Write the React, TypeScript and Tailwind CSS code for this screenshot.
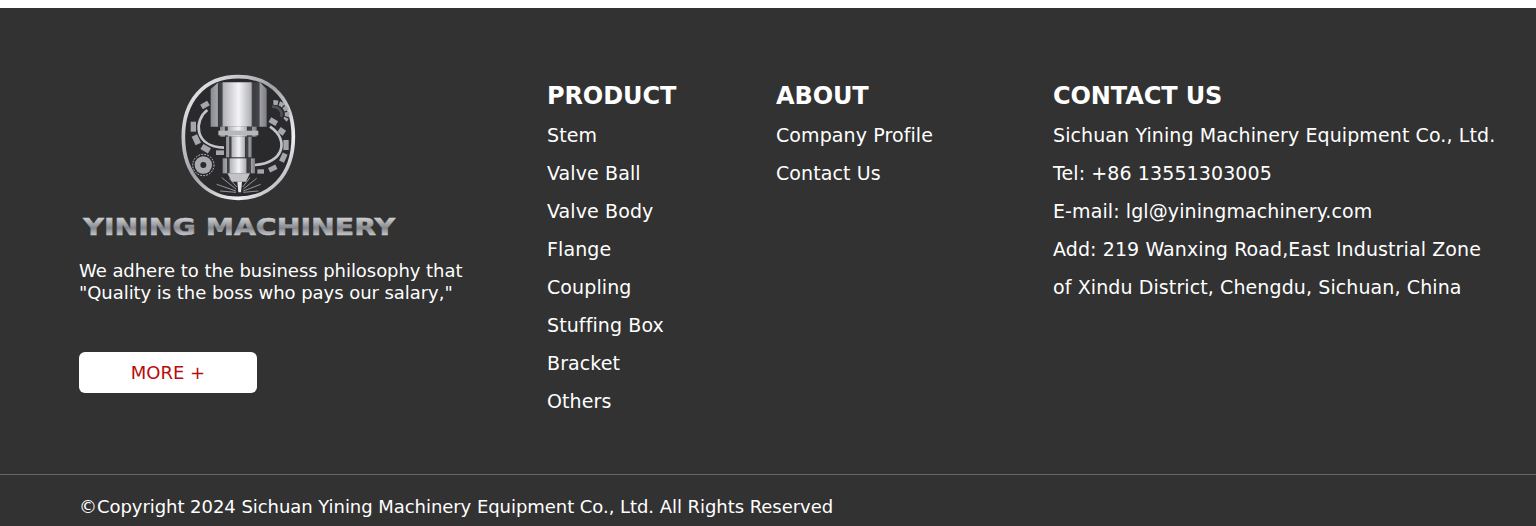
const productLinks = ['Stem', 'Valve Ball', 'Valve Body', 'Flange', 'Coupling', 'Stuffing Box', 'Bracket', 'Others']
const aboutLinks = ['Company Profile', 'Contact Us']
const contactLines = [
  'Sichuan Yining Machinery Equipment Co., Ltd.',
  'Tel: +86 13551303005',
  'E-mail: lgl@yiningmachinery.com',
  'Add: 219 Wanxing Road,East Industrial Zone',
  'of Xindu District, Chengdu, Sichuan, China',
]

function Logo() {
  return (
    <svg viewBox="27 0 993 540" className="block h-[180px] w-[331px]">
      <defs>
        <linearGradient id="ring" x1="0" y1="0" x2="1" y2="1">
          <stop offset="0" stopColor="#f6f6f8" />
          <stop offset="0.45" stopColor="#a0a2a7" />
          <stop offset="0.75" stopColor="#f0f0f3" />
          <stop offset="1" stopColor="#8f9095" />
        </linearGradient>
        <linearGradient id="steel" x1="0" y1="0" x2="1" y2="0">
          <stop offset="0" stopColor="#8a8b90" />
          <stop offset="0.12" stopColor="#a3a4a9" />
          <stop offset="0.14" stopColor="#3a3a3e" />
          <stop offset="0.2" stopColor="#45454a" />
          <stop offset="0.23" stopColor="#b4b5ba" />
          <stop offset="0.5" stopColor="#f4f4f6" />
          <stop offset="0.72" stopColor="#b0b1b6" />
          <stop offset="0.75" stopColor="#3a3a3e" />
          <stop offset="0.86" stopColor="#44444a" />
          <stop offset="0.89" stopColor="#9c9da2" />
          <stop offset="1" stopColor="#7d7e83" />
        </linearGradient>
        <linearGradient id="word" x1="0" y1="0" x2="0" y2="1">
          <stop offset="0" stopColor="#f4f4f6" />
          <stop offset="0.55" stopColor="#85878d" />
          <stop offset="1" stopColor="#f6f6f8" />
        </linearGradient>
      </defs>

      {/* badge ring */}
      <path
        d="M505 35 C610 35 670 110 670 215 C670 330 600 400 505 400 C410 400 340 330 340 215 C340 110 400 35 505 35Z"
        fill="#2a2a2c"
        stroke="url(#ring)"
        strokeWidth="11"
      />

      {/* curved pipes */}
      <path d="M412 135 C372 165 370 245 462 248" fill="none" stroke="#c4c5c9" strokeWidth="8" />
      <path d="M600 185 C660 225 640 295 555 300" fill="none" stroke="#c4c5c9" strokeWidth="8" />

      {/* ring segments */}
      <g fill="#a5a6ab">
        <rect x="393" y="112" width="24" height="16" transform="rotate(-30 405 120)" />
        <rect x="362" y="170" width="16" height="30" />
        <rect x="370" y="210" width="18" height="28" transform="rotate(-25 379 224)" />
        <rect x="394" y="242" width="26" height="18" transform="rotate(30 407 251)" />
        <rect x="438" y="256" width="24" height="14" />
        <rect x="598" y="162" width="24" height="16" transform="rotate(30 610 170)" />
        <rect x="625" y="190" width="20" height="18" transform="rotate(35 635 199)" />
        <rect x="640" y="225" width="16" height="30" />
        <rect x="632" y="265" width="16" height="26" transform="rotate(25 640 278)" />
        <rect x="596" y="303" width="24" height="15" transform="rotate(-25 608 310)" />
        <rect x="562" y="313" width="20" height="13" />
      </g>

      {/* top right gear */}
      <path d="M610 112 C650 112 660 150 645 165" fill="none" stroke="#a5a6ab" strokeWidth="14" strokeDasharray="14 4" />
      <path d="M606 125 C630 125 640 145 632 155" fill="none" stroke="#505155" strokeWidth="8" />

      {/* bottom left gear */}
      <circle cx="400" cy="300" r="32" fill="none" stroke="#c9cace" strokeWidth="3" strokeDasharray="5 4" />
      <circle cx="400" cy="300" r="26" fill="#a9aaaf" />
      <circle cx="400" cy="300" r="9" fill="#2b2b2d" />

      {/* spindle */}
      <path d="M422 72 L445 52 H570 L590 72 V185 H422Z" fill="url(#steel)" />
      <rect x="450" y="185" width="110" height="30" fill="url(#steel)" />
      <rect x="445" y="197" width="120" height="14" fill="#b7b8bc" />
      <rect x="468" y="215" width="77" height="62" fill="url(#steel)" />
      <rect x="458" y="280" width="97" height="45" fill="url(#steel)" />
      <path d="M472 325 H540 L528 350 H486Z" fill="#c2c3c7" />
      <path d="M502 350 H516 L513 382 H505Z" fill="#e6e6ea" />

      {/* sparks */}
      <g stroke="#c9cace" strokeWidth="2">
        <path d="M498 378 L440 358" />
        <path d="M498 372 L455 338" />
        <path d="M500 366 L478 340" />
        <path d="M498 382 L450 378" />
        <path d="M520 378 L572 358" />
        <path d="M520 372 L560 340" />
        <path d="M518 366 L540 338" />
        <path d="M520 382 L565 378" />
      </g>

      <text
        x="40"
        y="509"
        textLength="935"
        lengthAdjust="spacingAndGlyphs"
        fontFamily="'DejaVu Sans', sans-serif"
        fontWeight="700"
        fontSize="70"
        fill="url(#word)"
        stroke="url(#word)"
        strokeWidth="1.5"
      >
        YINING MACHINERY
      </text>
    </svg>
  )
}

function LinkColumn({ title, items, className }: { title: string; items: string[]; className: string }) {
  return (
    <div className={className}>
      <h3 className="text-[24px] font-bold leading-[38px] tracking-[-0.1px]">{title}</h3>
      <ul className="mt-[1px]">
        {items.map((item) => (
          <li key={item} className="text-[19px] leading-[38px] tracking-[0.1px]">
            {item}
          </li>
        ))}
      </ul>
    </div>
  )
}

export default function App() {
  return (
    <div className="bg-white pt-2 font-['DejaVu_Sans',sans-serif] text-white">
      <footer className="h-[518px] bg-[#323232]">
        <div className="flex h-[466px] pl-[79px]">
          <div className="w-[468px] pt-[57px]">
            <Logo />
            <p className="mt-[15px] text-[18px] leading-[22px] tracking-[-0.05px]">
              We adhere to the business philosophy that
              <br />
              "Quality is the boss who pays our salary,"
            </p>
            <a className="mt-[48px] flex h-[41px] w-[178px] items-center justify-center rounded-md bg-white text-[18px] text-[#b80c0c]">
              MORE +
            </a>
          </div>
          <LinkColumn title="PRODUCT" items={productLinks} className="w-[229px] pt-[69px]" />
          <LinkColumn title="ABOUT" items={aboutLinks} className="w-[277px] pt-[69px]" />
          <LinkColumn title="CONTACT US" items={contactLines} className="flex-1 pt-[69px]" />
        </div>
        <div className="border-t border-[#666666] pl-[79px] pt-[21px] text-[18px] leading-[22px] tracking-[-0.05px]">
          ©Copyright 2024 Sichuan Yining Machinery Equipment Co., Ltd. All Rights Reserved
        </div>
      </footer>
    </div>
  )
}
